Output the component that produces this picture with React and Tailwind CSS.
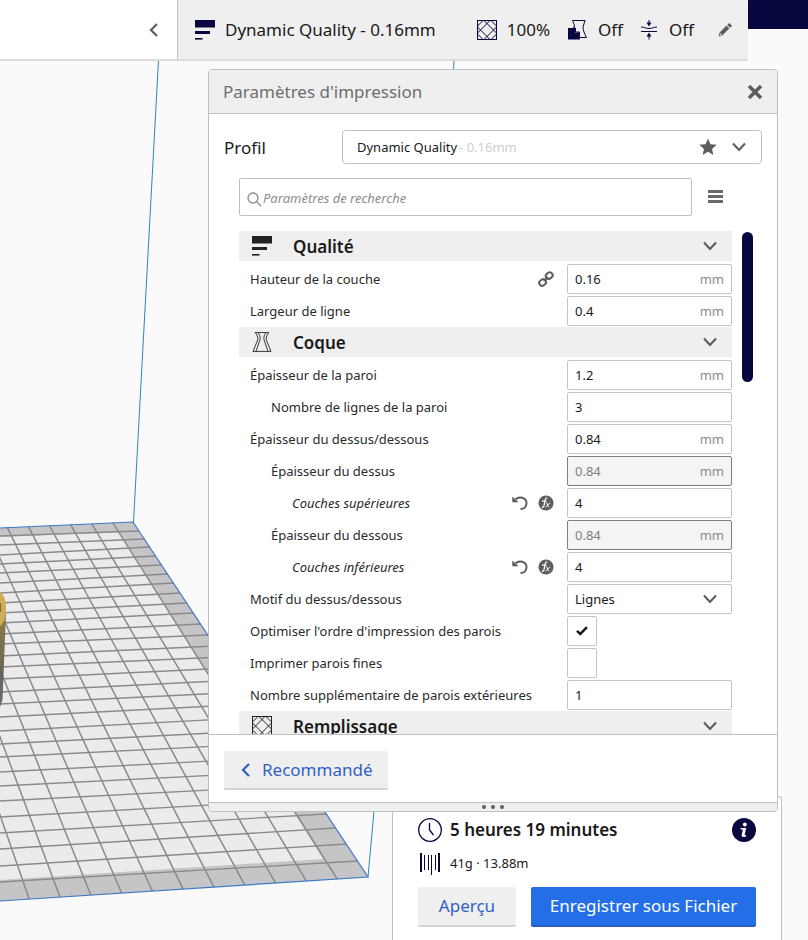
import React, { useState } from "react";

const FONT = "font-['Noto_Sans','Open_Sans',sans-serif]";

/* ---------- icons ---------- */

function QualityIcon({ className }) {
  return (
    <svg viewBox="0 0 20 20" className={className} fill="currentColor" aria-hidden="true">
      <rect x="0" y="0" width="20" height="7.5" />
      <rect x="0" y="11" width="15" height="3" />
      <rect x="0" y="18" width="7.5" height="1.6" />
    </svg>
  );
}

function InfillIcon({ className }) {
  return (
    <svg viewBox="0 0 20 20" className={className} fill="none" stroke="currentColor" aria-hidden="true">
      <rect x="0.5" y="0.5" width="19" height="19" />
      <path d="M13 .5.5 13M19.500 7 7 19.500M7 .5 19.500 13M.5 7 13 19.500M6 .5.5 6M14 .5 19.500 6M.5 14 6 19.500M19.500 14 14 19.500" />
    </svg>
  );
}

function SupportIcon({ className }) {
  return (
    <svg viewBox="0 0 20 20" className={className} aria-hidden="true">
      <path d="M4.500.5h12.500l-2 6.500c0 3 1.500 7 3.500 10.500h-7V12H7.500V8H5l1.700-2Z" fill="none" stroke="currentColor" />
      <path d="M0 8h7v4.500h5v7H0Z" fill="currentColor" />
    </svg>
  );
}

function AdhesionIcon({ className }) {
  return (
    <svg viewBox="0 0 18 20" className={className} fill="none" stroke="currentColor" aria-hidden="true">
      <path d="M1 7c4 0 4 1.500 8 1.500s4-1.500 8-1.500" />
      <path d="M1 11.500h16" />
      <path d="M9 0v4M9 19.500v-4" />
      <path d="M6.500 2.500h5L9 6.500ZM6.500 16.500h5L9 12.500Z" fill="currentColor" stroke="none" />
    </svg>
  );
}

function ShellIcon({ className }) {
  return (
    <svg viewBox="0 0 20 20" className={className} fill="none" stroke="currentColor" strokeWidth="0.9" aria-hidden="true">
      <path d="M3 .6h14M1 19.400h18" />
      <path d="M3 .6c1 1 3 3 2.800 7L1 19.400M6 .6c1.500 2 2.500 4 2 7L4 19.400M17 .6c-1 1-3 3-2.800 7L19 19.400M14 .6c-1.500 2-2.500 4-2 7L16 19.400" />
    </svg>
  );
}

function PencilIcon({ className }) {
  return (
    <svg viewBox="0 0 14 14" className={className} fill="currentColor" aria-hidden="true">
      <path d="M9.200 1.900 10.600.5q.6-.5 1.200 0l1.700 1.700q.5.600 0 1.200L12 4.700Z" />
      <path d="M8.500 2.600 11.300 5.400 4.500 12.300.6 13.400l1-4Zm-6 7.600-.6 2 2-.5Z" fillRule="evenodd" />
    </svg>
  );
}

function Chevron({ dir = "down", className }) {
  const d = { down: "M2 4.500 8 11l6-6.500", left: "M11 2 5 8l6 6" }[dir];
  return (
    <svg viewBox="0 0 16 16" className={className} fill="none" stroke="currentColor" strokeWidth="2.200" aria-hidden="true">
      <path d={d} />
    </svg>
  );
}

function CloseIcon({ className }) {
  return (
    <svg viewBox="0 0 16 16" className={className} fill="none" stroke="currentColor" strokeWidth="3.600" aria-hidden="true">
      <path d="M2 2l12 12M14 2 2 14" />
    </svg>
  );
}

function StarIcon({ className }) {
  return (
    <svg viewBox="0 0 18 18" className={className} fill="currentColor" aria-hidden="true">
      <path d="M9 .5l2.500 5.700 6.200.6-4.700 4.100 1.400 6.100L9 13.800l-5.400 3.200 1.400-6.100L.3 6.800l6.200-.6Z" />
    </svg>
  );
}

function SearchIcon({ className }) {
  return (
    <svg viewBox="0 0 15 15" className={className} fill="none" stroke="currentColor" strokeWidth="1.300" aria-hidden="true">
      <circle cx="6" cy="6" r="5" />
      <path d="M9.600 9.600 14.300 14.300" />
    </svg>
  );
}

function LinkIcon({ className }) {
  return (
    <svg viewBox="0 0 16 16" className={className} fill="none" stroke="currentColor" strokeWidth="2" aria-hidden="true">
      <rect x="7.600" y="1.600" width="7" height="5.800" rx="2.900" transform="rotate(-35 11.300 4.400)" />
      <rect x="1.200" y="8.600" width="7" height="5.800" rx="2.900" transform="rotate(-35 4.700 11.600)" />
      <path d="M6 10 10 6" />
    </svg>
  );
}

function UndoIcon({ className }) {
  return (
    <svg viewBox="0 0 16 16" className={className} aria-hidden="true">
      <path d="M3.500 4.300C7 1 14.500 2 14.500 8.300c0 3.500-2.500 5.700-6 5.700" fill="none" stroke="currentColor" strokeWidth="2" />
      <path d="M.3 1.500V7.300H6.500Z" fill="currentColor" />
    </svg>
  );
}

function FormulaIcon({ className }) {
  return (
    <svg viewBox="0 0 16 16" className={className} aria-hidden="true">
      <circle cx="8" cy="8" r="7.600" fill="currentColor" />
      <path d="M9.500 3.200C7.800 2.500 7.400 3.500 7 5.500L6 10.500C5.700 12 5 12.500 3.800 12.200M4.200 6.200h4.300" fill="none" stroke="#fff" strokeWidth="1.200" />
      <path d="M8 7.800c1.500-.3 1.600 4.700 3.400 4.400M12 7.800 7.500 12.300" fill="none" stroke="#fff" strokeWidth="1" />
    </svg>
  );
}

function CheckIcon({ className }) {
  return (
    <svg viewBox="0 0 12 10" className={className} fill="none" stroke="currentColor" strokeWidth="2.500" aria-hidden="true">
      <path d="M1 4.800 4.300 8 11 1.200" />
    </svg>
  );
}

function ClockIcon({ className }) {
  return (
    <svg viewBox="0 0 24 24" className={className} fill="none" stroke="currentColor" strokeWidth="1.300" aria-hidden="true">
      <circle cx="12" cy="12" r="11.300" />
      <path d="M11.500 5v7l4 5" />
    </svg>
  );
}

function SpoolIcon({ className }) {
  return (
    <svg viewBox="0 0 20 22" className={className} fill="currentColor" aria-hidden="true">
      <rect x="0" y="0" width="2" height="19" />
      <rect x="18" y="0" width="2" height="19" />
      <rect x="4" y="2" width="1" height="15" />
      <rect x="8" y="2" width="1" height="15" />
      <rect x="11" y="2" width="1" height="20" />
      <rect x="15" y="2" width="1" height="15" />
    </svg>
  );
}

function InfoIcon({ className }) {
  return (
    <svg viewBox="0 0 24 24" className={className} aria-hidden="true">
      <circle cx="12" cy="12" r="12" fill="currentColor" />
      <circle cx="12.800" cy="6.500" r="1.900" fill="#fff" />
      <path d="M8.800 10h5.400l-1.500 6.500q-.2 1 1.600.6l-.3 1.300q-4.800 1.500-4.400-1.200l1.300-5.700H8.600Z" fill="#fff" />
    </svg>
  );
}

/* ---------- 3D build plate ---------- */

const ROW_LEFT = [528, 536, 545, 555, 564, 573, 583, 593, 603, 613, 623, 634, 644, 656, 667, 679, 692, 704, 717, 731, 744, 757, 772, 786, 801, 817, 833, 849, 866, 882, 901];
const ROW_RIGHT = [522, 531, 539, 547, 556, 565, 574, 583, 593, 603, 613, 624, 635, 646, 657, 668, 680, 692, 704, 717, 730, 743, 757, 771, 785, 799, 814, 828, 844, 861, 877];
const edgeX = (y) => 133 + ((y - 522) * 235) / 355;

function BuildPlate() {
  const rows = ROW_LEFT.slice(1, -1).map((y, i) => `M0 ${y}L${edgeX(ROW_RIGHT[i + 1])} ${ROW_RIGHT[i + 1]}`);
  const cols = Array.from({ length: 12 }, (_, i) => {
    const k = i + 1;
    const xb = 134 - 21.1 * k;
    const xf = 368 - 30.8 * k;
    return `M${xb} ${522 + (133 - xb) * 0.045}L${xf} ${877 + (368 - xf) * 0.0652}`;
  });
  return (
    <svg width="808" height="940" className="absolute left-0 top-0" aria-hidden="true">
      <defs>
        <linearGradient id="body" x1="0" y1="0" x2="0" y2="1">
          <stop offset="0" stopColor="#8f7b45" />
          <stop offset="0.600" stopColor="#6d6957" />
          <stop offset="0.650" stopColor="#626262" />
          <stop offset="1" stopColor="#6e6e6e" />
        </linearGradient>
      </defs>
      <path d="M0 528 133 522 368 877 0 901Z" fill="#c5c5c8" />
      <path d="M0 537 119 532 323 859 0 880Z" fill="#ebebed" />
      <path d={rows.join("")} stroke="#8a8a8c" strokeWidth="1.300" />
      <path d={cols.join("")} stroke="#8a8a8c" strokeWidth="1.500" />
      <path d="M0 528 133 522 368 877 0 901" fill="none" stroke="#3b78c4" strokeWidth="1.200" />
      <path d="M158.500 60 133.500 522M454 60 453 80M375 800 368 877" fill="none" stroke="#2f86b8" />
      <path d="M0 610 6 612 2.500 700 0 707Z" fill="url(#body)" />
      <path d="M0 592C4 594 6 601 6 609S4 623 0 626Z" fill="#cfae5a" />
      <path d="M0 603h1v9H0Z" fill="#7d6a35" />
    </svg>
  );
}

/* ---------- settings list ---------- */

const SETTINGS = [
  { header: "Qualité", icon: QualityIcon },
  { label: "Hauteur de la couche", value: "0.16", unit: "mm", link: true },
  { label: "Largeur de ligne", value: "0.4", unit: "mm" },
  { header: "Coque", icon: ShellIcon },
  { label: "Épaisseur de la paroi", value: "1.2", unit: "mm" },
  { label: "Nombre de lignes de la paroi", value: "3", level: 1 },
  { label: "Épaisseur du dessus/dessous", value: "0.84", unit: "mm" },
  { label: "Épaisseur du dessus", value: "0.84", unit: "mm", level: 1, disabled: true },
  { label: "Couches supérieures", value: "4", level: 2, changed: true },
  { label: "Épaisseur du dessous", value: "0.84", unit: "mm", level: 1, disabled: true },
  { label: "Couches inférieures", value: "4", level: 2, changed: true },
  { label: "Motif du dessus/dessous", type: "select", options: ["Lignes", "Concentrique", "Zig Zag"] },
  { label: "Optimiser l'ordre d'impression des parois", type: "check", checked: true },
  { label: "Imprimer parois fines", type: "check", checked: false },
  { label: "Nombre supplémentaire de parois extérieures", value: "1" },
  { header: "Remplissage", icon: InfillIcon },
];

const INDENT = ["pl-[11px]", "pl-8", "pl-[53px]"];

function CategoryRow({ title, icon: Icon }) {
  return (
    <div className="h-8">
      <button type="button" className="flex h-[30px] w-full items-center bg-[#efefef] pl-[13px] pr-[14px] text-left">
        <Icon className="size-5 shrink-0 text-[#222]" />
        <span className="ml-[21px] flex-1 pt-[2px] text-[17px] font-semibold text-[#191919]">{title}</span>
        <Chevron className="size-4 text-[#5e5e5e]" />
      </button>
    </div>
  );
}

function SettingControl({ id, item }) {
  const box = "h-[30px] rounded-[2px] border";
  if (item.type === "select") {
    return (
      <span className="relative w-[165px]">
        <select id={id} className={`${box} block w-full appearance-none border-[#c4c4c4] bg-white pl-[7px] pt-[2px] text-[#191919]`}>
          {item.options.map((o) => (
            <option key={o}>{o}</option>
          ))}
        </select>
        <Chevron className="pointer-events-none absolute right-[14px] top-[7px] size-4 text-[#5e5e5e]" />
      </span>
    );
  }
  if (item.type === "check") {
    return (
      <span className="w-[165px]">
        <span className="relative block size-[30px]">
          <input id={id} type="checkbox" defaultChecked={item.checked} className={`${box} peer block w-[30px] appearance-none border-[#c4c4c4] bg-white`} />
          <CheckIcon className="pointer-events-none absolute left-[9px] top-[10px] hidden h-[10px] w-3 text-[#191919] peer-checked:block" />
        </span>
      </span>
    );
  }
  const tone = item.disabled ? "border-[#7f7f7f] bg-[#f4f4f4] text-[#808080]" : "border-[#c4c4c4] bg-white text-[#191919]";
  return (
    <span className={`${box} ${tone} flex w-[165px] items-center px-[7px] pt-[2px]`}>
      <input id={id} type="text" defaultValue={item.value} disabled={item.disabled} className="min-w-0 flex-1 bg-transparent outline-none" />
      {item.unit && <span className="text-[#8c8c8c]">{item.unit}</span>}
    </span>
  );
}

function SettingRow({ id, item }) {
  return (
    <div className={`flex h-8 items-center text-[13px] ${INDENT[item.level || 0]}`}>
      <label htmlFor={id} className={`flex-1 whitespace-nowrap pt-[2px] text-[#2a2a2a] ${item.changed ? "italic" : ""}`}>
        {item.label}
      </label>
      <span className="mr-[13px] flex items-center gap-[10px] text-[#5e5e5e]">
        {item.link && <LinkIcon className="size-4" />}
        {item.changed && (
          <>
            <button type="button" aria-label="Restaurer la valeur du profil">
              <UndoIcon className="size-4" />
            </button>
            <button type="button" aria-label="Restaurer la valeur calculée">
              <FormulaIcon className="size-4" />
            </button>
          </>
        )}
      </span>
      <SettingControl id={id} item={item} />
    </div>
  );
}

/* ---------- page ---------- */

function TopBar() {
  return (
    <header className="relative flex items-start">
      <div className="flex h-[61px] w-[178px] shrink-0 items-center justify-end border-b-2 border-r border-b-[#dcdcdc] border-r-[#c0c0c0] bg-white pr-[15px]">
        <button type="button" aria-label="Précédent">
          <Chevron dir="left" className="size-4 text-[#5e5e5e]" />
        </button>
      </div>
      <div className="flex h-[61px] flex-1 items-center rounded-r-[3px] border-b-2 border-[#dcdcdc] bg-[#efefef] pl-[17px] pr-4 text-[17px] text-[#191919]">
        <QualityIcon className="size-5 shrink-0 text-[#08073f]" />
        <span className="ml-[10px] flex-1 whitespace-nowrap">Dynamic Quality - 0.16mm</span>
        <InfillIcon className="size-5 text-[#08073f]" />
        <span className="ml-[10px] mr-[18px]">100%</span>
        <SupportIcon className="size-5 text-[#08073f]" />
        <span className="ml-[10px] mr-[17px]">Off</span>
        <AdhesionIcon className="h-5 w-[18px] text-[#08073f]" />
        <span className="ml-[11px] mr-[24px]">Off</span>
        <button type="button" aria-label="Modifier">
          <PencilIcon className="size-[14px] text-[#5e5e5e]" />
        </button>
      </div>
      <div className="h-[29px] w-[60px] shrink-0 bg-[#08073f]" />
    </header>
  );
}

function SettingsPanel() {
  const [profile, setProfile] = useState("Dynamic Quality");
  return (
    <section className="relative z-10 ml-[208px] mr-[30px] mt-2 rounded-[4px] border border-[#c0c0c0] bg-white">
      <div className="flex h-11 items-center justify-between rounded-t-[3px] border-b border-[#c0c0c0] bg-[#efefef] pl-[14px] pr-[14px]">
        <h1 className="text-[17px] text-[#6e6e6e]">Paramètres d'impression</h1>
        <button type="button" aria-label="Fermer">
          <CloseIcon className="size-4 text-[#5e5e5e]" />
        </button>
      </div>

      <div className="flex items-center pl-[15px] pr-[15px] pt-4">
        <label htmlFor="profil" className="w-[118px] pt-[2px] text-[17px] text-[#191919]">Profil</label>
        <div className="relative flex h-[34px] flex-1 items-center rounded-[4px] border border-[#c0c0c0] pl-[14px] pr-[14px] text-[13px]">
          <span className="pt-[2px] text-[#191919]">{profile}</span>
          <span className="ml-[2px] flex-1 pt-[2px] text-[#cfcfcf]">- 0.16mm</span>
          <StarIcon className="mr-[14px] size-[18px] text-[#5e5e5e]" />
          <Chevron className="size-4 text-[#5e5e5e]" />
          <select id="profil" value={profile} onChange={(e) => setProfile(e.target.value)} className="absolute inset-0 w-full opacity-0">
            <option>Dynamic Quality</option>
            <option>Standard Quality</option>
          </select>
        </div>
      </div>

      <div className="mt-[14px] flex items-center pl-[30px] pr-[54px]">
        <div className="flex h-[38px] flex-1 items-center rounded-[2px] border border-[#c0c0c0] pl-[7px] pt-1">
          <SearchIcon className="size-[15px] text-[#8c8c8c]" />
          <input type="text" aria-label="Paramètres de recherche" placeholder="Paramètres de recherche" className="ml-px flex-1 bg-transparent text-[13px] italic outline-none placeholder:text-[#8c8c8c]" />
        </div>
        <button type="button" aria-label="Visibilité des paramètres" className="ml-4 flex w-[15px] flex-col gap-[2px] pb-[2px]">
          <span className="h-[3px] bg-[#6a6a6a]" />
          <span className="h-[3px] bg-[#6a6a6a]" />
          <span className="h-[3px] bg-[#6a6a6a]" />
        </button>
      </div>

      <div className="mt-[15px] flex h-[504px] overflow-hidden border-b border-[#c0c0c0] pl-[30px] pr-6">
        <div className="flex-1">
          {SETTINGS.map((s, i) =>
            s.header ? <CategoryRow key={i} title={s.header} icon={s.icon} /> : <SettingRow key={i} id={`setting-${i}`} item={s} />
          )}
        </div>
        <div className="ml-[10px] mt-px h-[150px] w-[11px] rounded-full bg-[#08073f]" />
      </div>

      <div className="px-[15px] pb-3 pt-4">
        <button type="button" className="flex h-[39px] items-center rounded-[2px] border-b-2 border-[#d2d2d2] bg-[#efefef] pl-[14px] pr-4 text-[17px] text-[#2f62c4]">
          <Chevron dir="left" className="mr-2 size-4" />
          Recommandé
        </button>
      </div>

      <div className="flex h-[9px] items-center justify-center gap-[5px] rounded-b-[3px] border-t border-[#c0c0c0] bg-[#efefef]">
        <span className="size-1 rounded-full bg-[#5e5e5e]" />
        <span className="size-1 rounded-full bg-[#5e5e5e]" />
        <span className="size-1 rounded-full bg-[#5e5e5e]" />
      </div>
    </section>
  );
}

function ActionPanel() {
  return (
    <section className="relative -mt-4 ml-[392px] mr-[26px] flex-1 rounded-t-[4px] border border-b-0 border-[#c0c0c0] bg-white px-[25px] pt-5 text-[#191919]">
      <div className="flex items-center">
        <ClockIcon className="size-6 text-[#08073f]" />
        <span className="ml-2 flex-1 text-[17px] font-semibold">5 heures 19 minutes</span>
        <button type="button" aria-label="Informations">
          <InfoIcon className="size-6 text-[#08073f]" />
        </button>
      </div>
      <div className="mt-[10px] flex h-[22px] items-center">
        <SpoolIcon className="ml-[2px] h-[22px] w-5 text-[#08073f]" />
        <span className="ml-[10px] text-[13px]">41g · 13.88m</span>
      </div>
      <div className="mt-3 flex gap-[15px] text-[17px]">
        <button type="button" className="h-10 w-[98px] rounded-[2px] border-b-2 border-[#d2d2d2] bg-[#efefef] text-[#2f62c4]">Aperçu</button>
        <button type="button" className="h-10 flex-1 rounded-[2px] border-b-2 border-[#2a5fc0] bg-[#246ee8] text-white">Enregistrer sous Fichier</button>
      </div>
    </section>
  );
}

export default function App() {
  return (
    <div className={`${FONT} relative flex min-h-screen flex-col overflow-hidden bg-[#fafafa]`}>
      <BuildPlate />
      <TopBar />
      <SettingsPanel />
      <ActionPanel />
    </div>
  );
}
